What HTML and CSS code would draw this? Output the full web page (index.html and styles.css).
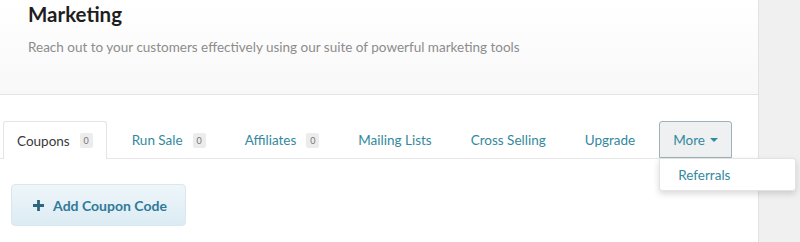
FILE: index.html
```html
<!DOCTYPE html>
<html>
<head>
<meta charset="utf-8">
<link rel="stylesheet" href="styles.css">
</head>
<body>
<div class="page">
  <main class="main">
    <header class="header">
      <h1 class="title">Marketing</h1>
      <p class="subtitle">Reach out to your customers effectively using our suite of powerful marketing tools</p>
    </header>
    <nav class="tabs">
      <div class="tab active">Coupons <span class="badge">0</span></div>
      <div class="tab">Run Sale <span class="badge">0</span></div>
      <div class="tab">Affiliates <span class="badge">0</span></div>
      <div class="tab">Mailing Lists</div>
      <div class="tab">Cross Selling</div>
      <div class="tab">Upgrade</div>
      <div class="tab more">More <span class="caret"></span>
        <div class="dropdown"><div class="dropdown-item">Referrals</div></div>
      </div>
    </nav>
    <div class="actions">
      <button class="btn">
        <svg class="plus" width="13" height="13" viewBox="0 0 13 13"><path d="M6.5 1v11M1 6.5h11" stroke="#2d6681" stroke-width="2.8" stroke-linecap="butt"/></svg>
        Add Coupon Code
      </button>
    </div>
  </main>
  <aside class="side"></aside>
</div>
</body>
</html>
```
FILE: styles.css
```css
html, body { margin: 0; padding: 0; }
body {
  font-family: Lato, "Open Sans", Arial, sans-serif;
  background: #fff;
  width: 800px;
  height: 242px;
  overflow: hidden;
}
.page { display: flex; height: 242px; }
.main { width: 758px; flex: none; }
.side { flex: 1; background: #f0f0f0; border-left: 1px solid #e2e2e2; }

.header {
  height: 94px;
  border-bottom: 1px solid #e4e4e4;
  background: linear-gradient(#ffffff, #f8f8f8);
  padding-left: 28px;
  box-sizing: content-box;
}
.title {
  margin: 0;
  padding-top: 2px;
  font-size: 20.5px;
  line-height: 24px;
  font-weight: 700;
  color: #1e1e1e;
}
.subtitle {
  margin: 12px 0 0;
  font-size: 13.5px;
  line-height: 18px;
  color: #8c8c8c;
}

.tabs {
  display: flex;
  gap: 11px;
  margin-top: 26px;
  padding-left: 3px;
  border-bottom: 1px solid #e6e6e6;
  height: 37px;
}
.tab {
  position: relative;
  display: flex;
  align-items: center;
  padding: 0 13px;
  height: 37px;
  box-sizing: border-box;
  font-size: 13.5px;
  color: #33899e;
  border: 1px solid transparent;
  border-bottom: none;
  border-radius: 3px 3px 0 0;
}
.tab.active {
  color: #3a3a3a;
  border-color: #e4e4e4;
  background: #fff;
  height: 38px;
  margin-bottom: -1px;
}
.badge {
  display: inline-block;
  margin-left: 10px;
  width: 13px;
  height: 15px;
  line-height: 15px;
  text-align: center;
  font-size: 9px;
  color: #777;
  background: #ececec;
  border-radius: 2px;
}
.tab.more {
  margin-left: -1px;
  background: #eef0f1;
  border-color: #9db2bb;
  border-bottom: 1px solid #9db2bb;
  padding: 0 13px;
  height: 37px;
}
.caret {
  display: inline-block;
  margin-left: 5px;
  width: 0; height: 0;
  border-left: 4px solid transparent;
  border-right: 4px solid transparent;
  border-top: 4px solid #33899e;
}
.dropdown {
  position: absolute;
  left: -1px;
  top: 36px;
  width: 137px;
  height: 33px;
  background: #fff;
  border: 1px solid #e3e3e3;
  border-radius: 0 3px 3px 3px;
  box-shadow: 0 3px 6px rgba(0,0,0,0.15);
  box-sizing: border-box;
  display: flex;
  align-items: center;
}
.dropdown-item {
  padding-left: 18px;
  font-size: 13.5px;
  color: #33899e;
}

.actions { padding: 25px 0 0 11px; }
.btn {
  display: flex;
  align-items: center;
  justify-content: center;
  gap: 8px;
  width: 175px;
  height: 42px;
  border: 1px solid #d9e7ee;
  border-radius: 4px;
  background: linear-gradient(#eef6fa, #dcebf3);
  font-family: inherit;
  font-size: 14px;
  font-weight: 700;
  color: #2f7a98;
  padding: 0 0 0 2px;
}
.plus { flex: none; }
```
